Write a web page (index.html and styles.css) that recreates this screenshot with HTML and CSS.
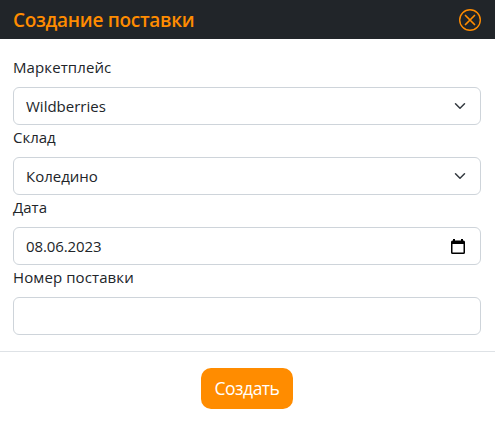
FILE: index.html
```html
<!DOCTYPE html>
<html lang="ru">
<head>
<meta charset="utf-8">
<title>Создание поставки</title>
<link rel="stylesheet" href="styles.css">
</head>
<body>
<form class="modal">
  <header class="modal-header">
    <h1 class="modal-title">Создание поставки</h1>
    <svg class="close" viewBox="0 0 22 22"><circle cx="11" cy="11" r="10.3"/><path class="cross" d="m6.500 6.500 9 9m0-9-9 9"/></svg>
  </header>
  <main class="modal-body">
    <div class="label marketplace">Маркетплейс</div>
    <div class="control"><span>Wildberries</span><svg class="chevron" viewBox="0 0 16 16"><path d="m2 5 6 6 6-6"/></svg></div>
    <div class="label">Склад</div>
    <div class="control"><span>Коледино</span><svg class="chevron" viewBox="0 0 16 16"><path d="m2 5 6 6 6-6"/></svg></div>
    <div class="label">Дата</div>
    <div class="control date"><span>08.06.2023</span><svg class="calendar" viewBox="0 0 14 15"><path fill-rule="evenodd" d="M2 0h2v1.500h6V0h2v1.500h.5A1.500 1.500 0 0 1 14 3v10.500a1.500 1.500 0 0 1-1.500 1.500h-11A1.500 1.500 0 0 1 0 13.500V3a1.500 1.500 0 0 1 1.500-1.500H2zM1.500 5v8.500h11V5z"/></svg></div>
    <div class="label number">Номер поставки</div>
    <div class="control"></div>
  </main>
  <footer class="modal-footer"><button class="submit" type="button">Создать</button></footer>
</form>
</body>
</html>
```
FILE: styles.css
```css
* { box-sizing: border-box; }
body { margin: 0; background: #fff; color: #212529; font: 16px/24px "Open Sans", "Noto Sans", sans-serif; }
.modal-header { display: flex; justify-content: space-between; align-items: center; height: 39px; padding: 0 14px 0 13px; background: #212529; color: #ff8c00; }
.modal-title { margin: 0; font-size: 19px; line-height: 30px; font-weight: 600; letter-spacing: -.3px; }
.close { width: 22px; height: 22px; fill: none; stroke: currentColor; stroke-width: 1.4; stroke-linecap: round; }
.cross { stroke-width: 1.7; }
.modal-body { height: 312px; padding: 16px 14px 0 13px; }
.label { height: 32px; font-size: 15px; }
.marketplace, .number { letter-spacing: .1px; }
.control { display: flex; align-items: center; justify-content: space-between; height: 38px; padding: 0 12px; border: 1px solid #ced4da; border-radius: 6px; font-size: 15px; }
.date { padding-right: 15px; letter-spacing: -.1px; }
.chevron { width: 16px; height: 12px; fill: none; stroke: #343a40; stroke-width: 2; stroke-linecap: round; stroke-linejoin: round; }
.calendar { width: 14px; height: 15px; fill: #000; }
.modal-footer { display: flex; justify-content: center; height: 70px; padding: 16px 1px 0 0; border-top: 1px solid #dee2e6; }
.submit { width: 92px; height: 41px; padding: 0; border: 0; border-radius: 10px; background: #ff8c00; color: #fff; font: 17.5px/41px "Open Sans", sans-serif; letter-spacing: -.5px; }
```
